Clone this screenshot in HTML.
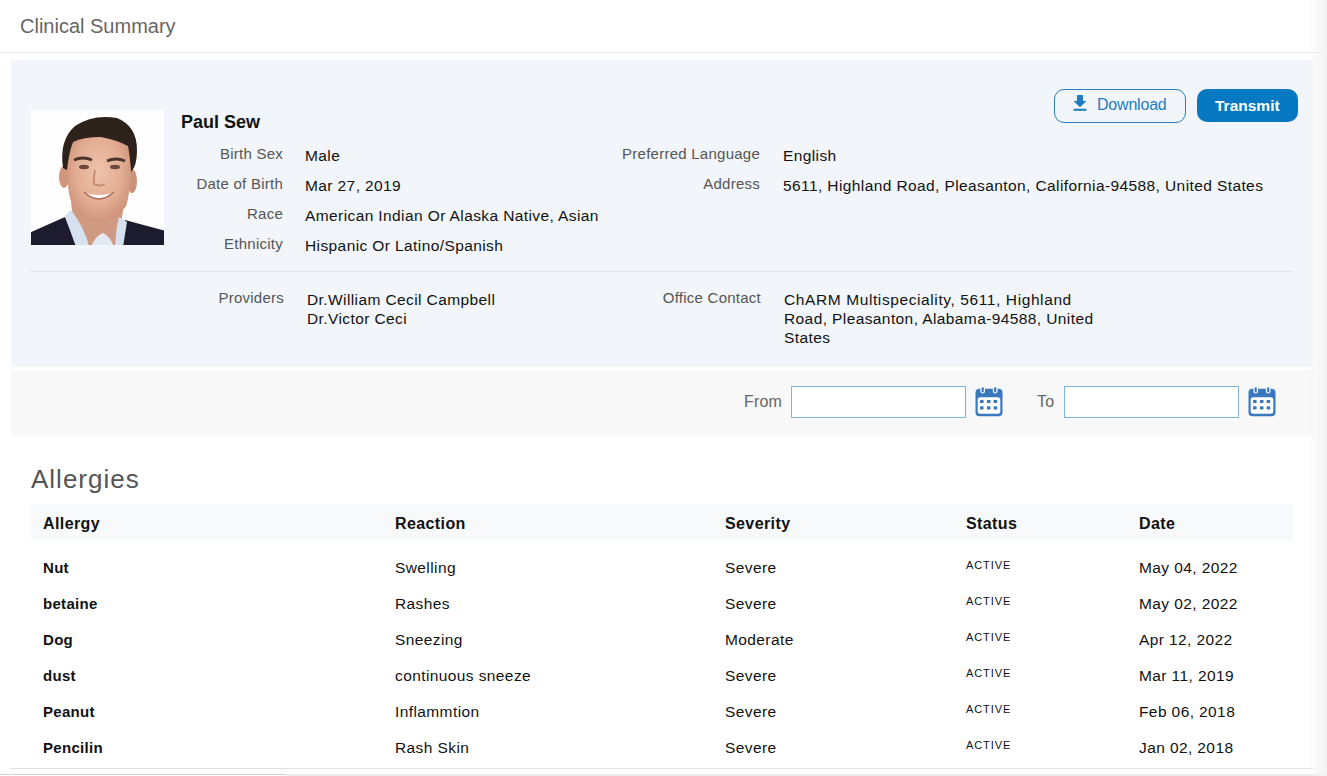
<!DOCTYPE html>
<html><head><meta charset="utf-8">
<style>
*{box-sizing:border-box;margin:0;padding:0}
html,body{width:1327px;height:776px;overflow:hidden;background:#fff;font-family:"Liberation Sans",sans-serif;color:#111}
.abs{position:absolute;white-space:nowrap}
#title{left:20px;top:15px;font-size:20px;color:#666;line-height:23px}
#hline{left:0;top:52px;width:1327px;height:1px;background:#e6e6e6}
#rshade{left:1308px;top:0;width:19px;height:776px;background:linear-gradient(to right,rgba(242,242,242,0),#f2f2f2)}
#panel{left:11px;top:60px;width:1302px;height:307px;background:#f2f6fa}
#photo{left:31px;top:110px;width:133px;height:135px;overflow:hidden}
#name{left:181px;top:112px;font-size:18px;font-weight:bold;color:#111;line-height:21px}
.lbl{font-size:15px;color:#555;text-align:right;line-height:17px;letter-spacing:0.25px}
.val{font-size:15.5px;color:#111;letter-spacing:0.4px;line-height:18px}
#divider{left:30px;top:271px;width:1263px;height:1px;background:#dfe5ea}
#btn-dl{left:1054px;top:89px;width:132px;height:34px;border:1px solid #2680c3;border-radius:10px}
#dl-txt{left:1097px;top:96px;font-size:16px;color:#1f7cc2;letter-spacing:-0.2px;line-height:18px}
#btn-tr{left:1197px;top:89px;width:101px;height:33px;background:#0778c2;border-radius:10px}
#tr-txt{left:1215px;top:97px;font-size:15.5px;font-weight:bold;color:#fff;line-height:18px}
#datebar{left:11px;top:370px;width:1302px;height:66px;background:#f8f8f8}
.inp{width:175px;height:32px;border:1.5px solid #80b5dc;background:#fff}
.dlbl{font-size:16px;color:#666;line-height:18px;letter-spacing:0.2px}
#allerg{left:31px;top:465px;font-size:26px;color:#555;letter-spacing:1px;line-height:29px}
#thead{left:31px;top:504px;width:1262px;height:37px;background:#f8f9fa}
.th{font-size:16px;font-weight:bold;color:#111;letter-spacing:0.4px;line-height:18px}
.td{font-size:15.5px;color:#111;letter-spacing:0.4px;line-height:18px}
.tdb{font-size:15px;font-weight:bold;color:#111;letter-spacing:0.3px;line-height:18px}
.st{font-size:11px;color:#111;letter-spacing:0.9px;line-height:13px}
#botline{left:10px;top:768px;width:1303px;height:1px;background:#e2e2e2}
#botline2{left:0;top:774px;width:286px;height:1px;background:#cfcfcf}
#botfill{left:286px;top:774px;width:1041px;height:2px;background:#ebebeb}
</style></head><body>
<div class="abs" id="title">Clinical Summary</div>
<div class="abs" id="hline"></div>
<div class="abs" id="panel"></div>
<div class="abs" id="photo"><svg width="133" height="135" viewBox="0 0 133 135">
<defs><filter id="bl" x="-5%" y="-5%" width="110%" height="110%"><feGaussianBlur stdDeviation="0.7"/></filter>
<radialGradient id="sk" cx="0.5" cy="0.45" r="0.6"><stop offset="0" stop-color="#eec3aa"/><stop offset="0.6" stop-color="#e2ad93"/><stop offset="1" stop-color="#c98e74"/></radialGradient></defs>
<rect width="133" height="135" fill="#fefefe"/>
<g filter="url(#bl)">
<path d="M40 86 Q40 112 50 118 L50 135 L88 135 L88 118 Q93 104 93 86Z" fill="#d09a82"/>
<path d="M-2 123 L34 107 L46 137 L-2 137Z" fill="#1a1f2d"/>
<path d="M94 110 L135 121 L135 137 L90 137Z" fill="#1a1f2d"/>
<path d="M34 106 L40 100 Q54 118 58 137 L45 137Z" fill="#d5e1ef"/>
<path d="M88 107 L96 112 L92 137 L84 137 Q85 118 88 107Z" fill="#d5e1ef"/>
<path d="M60 137 Q64 126 72 123 Q79 126 83 137Z" fill="#e2e9f2"/>
<ellipse cx="33" cy="67" rx="5" ry="11" fill="#cf967c"/>
<ellipse cx="101" cy="71" rx="5" ry="12" fill="#cd927a"/>
<path d="M36 40 Q35 85 42 95 Q54 112 70 112 Q86 110 95 96 Q100 82 100 40 Q96 20 68 20 Q40 20 36 40Z" fill="url(#sk)"/>
<path d="M32 58 Q28 30 44 16 Q62 4 86 8 Q106 16 106 40 Q106 56 100 62 Q99 46 97 36 Q86 30 70 27 Q52 27 42 32 Q38 42 36 60Z" fill="#2f221d"/>
<path d="M43 50 Q52 46 61 50" stroke="#4a342a" stroke-width="2.8" fill="none"/>
<path d="M76 51 Q85 47 94 51" stroke="#4a342a" stroke-width="2.8" fill="none"/>
<ellipse cx="53" cy="57" rx="5" ry="2.2" fill="#6d4a3c"/>
<ellipse cx="84" cy="57" rx="5" ry="2.2" fill="#6d4a3c"/>
<path d="M64 60 Q62 70 63 74 Q68 77 74 74" stroke="#c48a72" stroke-width="1.8" fill="none"/>
<path d="M54 83 Q68 93 82 83 Q68 87 54 83Z" fill="#fff"/>
<path d="M53 82 Q68 96 83 82" stroke="#b07060" stroke-width="1.6" fill="none"/>
</g>
</svg></div>
<div class="abs" id="name">Paul Sew</div>

<div class="abs lbl" style="right:1044px;top:145px">Birth Sex</div>
<div class="abs lbl" style="right:1044px;top:175px">Date of Birth</div>
<div class="abs lbl" style="right:1044px;top:205px">Race</div>
<div class="abs lbl" style="right:1044px;top:235px">Ethnicity</div>
<div class="abs val" style="left:305px;top:147px">Male</div>
<div class="abs val" style="left:305px;top:177px">Mar 27, 2019</div>
<div class="abs val" style="left:305px;top:207px">American Indian Or Alaska Native, Asian</div>
<div class="abs val" style="left:305px;top:237px">Hispanic Or Latino/Spanish</div>

<div class="abs lbl" style="right:567px;top:145px">Preferred Language</div>
<div class="abs lbl" style="right:567px;top:175px">Address</div>
<div class="abs val" style="left:783px;top:147px">English</div>
<div class="abs val" style="left:783px;top:177px">5611, Highland Road, Pleasanton, California-94588, United States</div>

<div class="abs" id="btn-dl"></div>
<svg class="abs" style="left:1073px;top:95px" width="14" height="16" viewBox="0 0 14 16"><path fill="#1f7cc2" d="M4 0h6v6h3.5L7 12.2 0.5 6H4z"/><rect x="0.5" y="13.8" width="13" height="2" fill="#1f7cc2"/></svg>
<div class="abs" id="dl-txt">Download</div>
<div class="abs" id="btn-tr"></div>
<div class="abs" id="tr-txt">Transmit</div>

<div class="abs" id="divider"></div>
<div class="abs lbl" style="right:1043px;top:289px">Providers</div>
<div class="abs val" style="left:307px;top:290px;line-height:19px">Dr.William Cecil Campbell<br>Dr.Victor Ceci</div>
<div class="abs lbl" style="right:566px;top:289px">Office Contact</div>
<div class="abs val" style="left:784px;top:290px;line-height:19px"><span style="letter-spacing:0.6px">ChARM Multispeciality, 5611, Highland</span><br>Road, Pleasanton, Alabama-94588, United<br>States</div>

<div class="abs" id="datebar"></div>
<div class="abs dlbl" style="left:744px;top:393px">From</div>
<div class="abs inp" style="left:791px;top:386px"></div>
<div class="abs" style="left:975px;top:387px"><svg width="28" height="30" viewBox="0 0 28 30"><path fill="#3a78bd" d="M4.5 1.8h19a4 4 0 0 1 4 4v19.5a4 4 0 0 1-4 4h-19a4 4 0 0 1-4-4V5.8a4 4 0 0 1 4-4z"/><rect x="2.7" y="10.2" width="22.6" height="16.6" rx="2.5" fill="#fff"/><g fill="#fff"><rect x="5.4" y="0" width="4.6" height="6.6" rx="2.3"/><rect x="17.9" y="0" width="4.6" height="6.6" rx="2.3"/></g><g fill="#3a78bd"><rect x="6.6" y="0.2" width="2.2" height="5.4" rx="1"/><rect x="19.1" y="0.2" width="2.2" height="5.4" rx="1"/><rect x="5" y="13" width="3.6" height="3" rx=".6"/><rect x="11.9" y="13" width="3.6" height="3" rx=".6"/><rect x="18.6" y="13" width="3.6" height="3" rx=".6"/><rect x="5" y="19.2" width="3.6" height="3.4" rx=".9"/><rect x="11.9" y="19.2" width="3.6" height="3.4" rx=".9"/><rect x="18.6" y="19.2" width="3.6" height="3.4" rx=".9"/></g></svg></div>
<div class="abs dlbl" style="left:1037px;top:393px">To</div>
<div class="abs inp" style="left:1064px;top:386px"></div>
<div class="abs" style="left:1248px;top:387px"><svg width="28" height="30" viewBox="0 0 28 30"><path fill="#3a78bd" d="M4.5 1.8h19a4 4 0 0 1 4 4v19.5a4 4 0 0 1-4 4h-19a4 4 0 0 1-4-4V5.8a4 4 0 0 1 4-4z"/><rect x="2.7" y="10.2" width="22.6" height="16.6" rx="2.5" fill="#fff"/><g fill="#fff"><rect x="5.4" y="0" width="4.6" height="6.6" rx="2.3"/><rect x="17.9" y="0" width="4.6" height="6.6" rx="2.3"/></g><g fill="#3a78bd"><rect x="6.6" y="0.2" width="2.2" height="5.4" rx="1"/><rect x="19.1" y="0.2" width="2.2" height="5.4" rx="1"/><rect x="5" y="13" width="3.6" height="3" rx=".6"/><rect x="11.9" y="13" width="3.6" height="3" rx=".6"/><rect x="18.6" y="13" width="3.6" height="3" rx=".6"/><rect x="5" y="19.2" width="3.6" height="3.4" rx=".9"/><rect x="11.9" y="19.2" width="3.6" height="3.4" rx=".9"/><rect x="18.6" y="19.2" width="3.6" height="3.4" rx=".9"/></g></svg></div>

<div class="abs" id="allerg">Allergies</div>
<div class="abs" id="thead"></div>
<div class="abs th" style="left:43px;top:515px">Allergy</div>
<div class="abs th" style="left:395px;top:515px">Reaction</div>
<div class="abs th" style="left:725px;top:515px">Severity</div>
<div class="abs th" style="left:966px;top:515px">Status</div>
<div class="abs th" style="left:1139px;top:515px">Date</div>
<div class="abs tdb" style="left:43px;top:559px">Nut</div>
<div class="abs td" style="left:395px;top:559px">Swelling</div>
<div class="abs td" style="left:725px;top:559px">Severe</div>
<div class="abs st" style="left:966px;top:559px">ACTIVE</div>
<div class="abs td" style="left:1139px;top:559px">May 04, 2022</div>
<div class="abs tdb" style="left:43px;top:595px">betaine</div>
<div class="abs td" style="left:395px;top:595px">Rashes</div>
<div class="abs td" style="left:725px;top:595px">Severe</div>
<div class="abs st" style="left:966px;top:595px">ACTIVE</div>
<div class="abs td" style="left:1139px;top:595px">May 02, 2022</div>
<div class="abs tdb" style="left:43px;top:631px">Dog</div>
<div class="abs td" style="left:395px;top:631px">Sneezing</div>
<div class="abs td" style="left:725px;top:631px">Moderate</div>
<div class="abs st" style="left:966px;top:631px">ACTIVE</div>
<div class="abs td" style="left:1139px;top:631px">Apr 12, 2022</div>
<div class="abs tdb" style="left:43px;top:667px">dust</div>
<div class="abs td" style="left:395px;top:667px">continuous sneeze</div>
<div class="abs td" style="left:725px;top:667px">Severe</div>
<div class="abs st" style="left:966px;top:667px">ACTIVE</div>
<div class="abs td" style="left:1139px;top:667px">Mar 11, 2019</div>
<div class="abs tdb" style="left:43px;top:703px">Peanut</div>
<div class="abs td" style="left:395px;top:703px">Inflammtion</div>
<div class="abs td" style="left:725px;top:703px">Severe</div>
<div class="abs st" style="left:966px;top:703px">ACTIVE</div>
<div class="abs td" style="left:1139px;top:703px">Feb 06, 2018</div>
<div class="abs tdb" style="left:43px;top:739px">Pencilin</div>
<div class="abs td" style="left:395px;top:739px">Rash Skin</div>
<div class="abs td" style="left:725px;top:739px">Severe</div>
<div class="abs st" style="left:966px;top:739px">ACTIVE</div>
<div class="abs td" style="left:1139px;top:739px">Jan 02, 2018</div>
<div class="abs" id="botline"></div>
<div class="abs" id="botline2"></div>
<div class="abs" id="botfill"></div>
<div class="abs" id="rshade"></div>
</body></html>
